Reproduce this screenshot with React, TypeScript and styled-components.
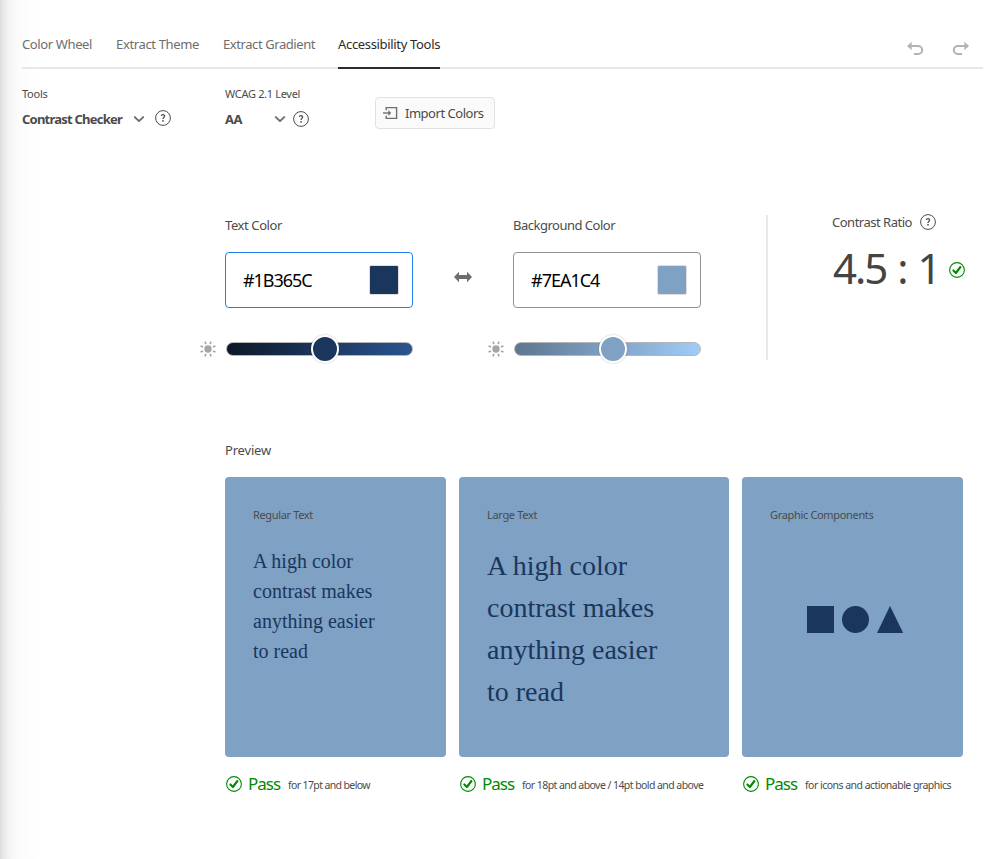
import React from 'react';
import styled, { createGlobalStyle } from 'styled-components';

const TEXT_COLOR = '#1b365c';
const BACKGROUND_COLOR = '#7ea1c4';

const GlobalStyle = createGlobalStyle`
  * { box-sizing: border-box; }
  body { margin: 0; background: #fff; }
  p { margin: 0; }
`;

const Page = styled.div`
  width: 995px;
  height: 859px;
  overflow: hidden;
  padding: 20px 12px 0 22px;
  background: linear-gradient(to right, #dcdcdc 0, #e4e4e4 2px, #efefef 6px, #f6f6f6 11px, #fbfbfb 18px, #fdfdfd 27px, #fff 40px);
  color: #4b4b4b;
  font-family: 'Noto Sans', 'Open Sans', sans-serif;
  font-size: 13px;
`;

const Label = styled.span<{ $size?: number; $bold?: boolean; $ls?: number; $color?: string; $line?: number }>`
  display: block;
  white-space: nowrap;
  font-size: ${p => p.$size ?? 13}px;
  line-height: ${p => p.$line ?? 20}px;
  font-weight: ${p => (p.$bold ? 700 : 400)};
  letter-spacing: ${p => p.$ls ?? -0.4}px;
  color: ${p => p.$color ?? '#4b4b4b'};
`;

const Header = styled.header`
  display: flex;
  justify-content: space-between;
  height: 49px;
  border-bottom: 2px solid #e8e8e8;
`;

const Tabs = styled.nav`
  display: flex;
`;

const Tab = styled.div<{ $width: number; $gap?: number; $ls: number; $active?: boolean }>`
  width: ${p => p.$width}px;
  height: 49px;
  margin-right: ${p => p.$gap ?? 0}px;
  padding-top: 14px;
  line-height: 20px;
  white-space: nowrap;
  letter-spacing: ${p => p.$ls}px;
  color: ${p => (p.$active ? '#2c2c2c' : '#6e6e6e')};
  border-bottom: 2px solid ${p => (p.$active ? '#2c2c2c' : 'transparent')};
`;

const History = styled.div`
  display: flex;
  gap: 28px;
  padding: 20px 13px 0 0;
  color: #b3b3b3;
  svg { display: block; }
`;

const Toolbar = styled.section`
  display: flex;
  height: 146px;
  padding-top: 15px;
`;

const Field = styled.div<{ $width: number }>`
  width: ${p => p.$width}px;
`;

const Picker = styled.div<{ $labelWidth: number; $gap: number; $helpLift?: number }>`
  display: grid;
  grid-template-columns: ${p => p.$labelWidth}px 12px 16px;
  column-gap: ${p => p.$gap}px;
  align-items: center;
  height: 20px;
  margin-top: 5px;
  svg { display: block; }
  svg:last-child { margin-bottom: ${p => p.$helpLift ?? 0}px; }
`;

const ImportButton = styled.button`
  display: flex;
  align-items: center;
  gap: 7px;
  width: 120px;
  height: 32px;
  margin: 13px 0 0;
  padding: 0 0 0 7px;
  border: 1px solid #e1e1e1;
  border-radius: 4px;
  background: #fafafa;
  font-family: inherit;
`;

const Checker = styled.section`
  display: flex;
  height: 145px;
  padding-left: 174px;
`;

const ColorPanel = styled.div`
  width: 217px;
`;

const PanelBody = styled.div`
  padding-left: 29px;
`;

const ColorInput = styled.div<{ $focused?: boolean }>`
  display: flex;
  align-items: center;
  justify-content: space-between;
  width: 188px;
  height: 56px;
  margin-top: 17px;
  padding: 0 13px 0 17px;
  border: 1px solid ${p => (p.$focused ? '#2680eb' : '#909090')};
  border-radius: 4px;
  background: #fff;
`;

const Swatch = styled.div<{ $color: string }>`
  width: 30px;
  height: 30px;
  border: 1px solid #dedede;
  border-radius: 2px;
  background: ${p => p.$color};
`;

const SliderRow = styled.div`
  display: flex;
  align-items: center;
  gap: 10px;
  height: 28px;
  margin-top: 27px;
  padding-left: 4px;
  svg { display: block; flex: none; }
`;

const Track = styled.div<{ $from: string; $to: string }>`
  display: flex;
  flex: none;
  align-items: center;
  justify-content: center;
  width: 187px;
  height: 14px;
  padding-left: 11px;
  border: 1px solid #b5b5b5;
  border-radius: 7px;
  background: linear-gradient(to right, ${p => p.$from}, ${p => p.$to});
`;

const Thumb = styled.div<{ $color: string }>`
  flex: none;
  width: 28px;
  height: 28px;
  border: 2px solid #fff;
  border-radius: 50%;
  background: ${p => p.$color};
  box-shadow: 0 0 2px rgba(0, 0, 0, 0.25);
`;

const Swap = styled.div`
  width: 71px;
  padding: 56px 0 0 41px;
  svg { display: block; }
`;

const Ratio = styled.div`
  width: 217px;
  margin-left: 65px;
  padding-left: 64px;
  border-left: 2px solid #e8e8e8;
`;

const RatioHead = styled.div`
  display: grid;
  grid-template-columns: 80px 16px;
  grid-template-rows: 14px;
  gap: 8px;
  align-items: center;
  height: 14px;
`;

const RatioValue = styled.div`
  display: flex;
  align-items: center;
  gap: 10px;
  height: 50px;
  margin-top: 14px;
  padding-left: 1px;
  word-spacing: 2px;
  svg { display: block; flex: none; margin-top: 4px; }
`;

const Preview = styled.section`
  padding: 80px 0 0 203px;
`;

const Cards = styled.div`
  display: grid;
  grid-template-columns: 221px 270px 221px;
  column-gap: 13px;
  margin-top: 17px;
`;

const Card = styled.article`
  height: 280px;
  padding: 28px;
  border-radius: 4px;
  background: ${BACKGROUND_COLOR};
`;

const Sample = styled.p<{ $size: number; $line: number; $top: number }>`
  margin-top: ${p => p.$top}px;
  font: ${p => p.$size}px/${p => p.$line}px 'Liberation Serif', serif;
  color: ${TEXT_COLOR};
  white-space: pre-line;
`;

const Shapes = styled.div`
  display: flex;
  margin: 81px 0 0 37px;
  svg { display: block; }
`;

const Result = styled.div`
  display: flex;
  align-items: center;
  height: 20px;
  padding: 0 0 0 1px;
  margin-top: 17px;
  svg { display: block; flex: none; }
`;

const PassText = styled(Label)`
  width: 32px;
  margin: 0 8px 0 6px;
`;

const Note = styled(Label)`
  margin-top: 2px;
`;

const HelpIcon = () => (
  <svg width="16" height="16" viewBox="0 0 16 16" fill="none">
    <circle cx="8" cy="8" r="7.4" stroke="#4b4b4b" strokeWidth="1" />
    <path d="M6.3 5.9C6.5 5 7.1 4.7 7.9 4.7c1 0 1.7.5 1.7 1.4 0 1.3-1.6 1.3-1.6 2.9" stroke="#4b4b4b" strokeWidth="1.3" />
    <circle cx="8" cy="10.8" r=".9" fill="#4b4b4b" />
  </svg>
);

const Chevron = () => (
  <svg width="12" height="8" viewBox="0 0 12 8" fill="none">
    <path d="M1.8 2.1 6 6.1l4.2-4" stroke="#6e6e6e" strokeWidth="2" strokeLinecap="round" strokeLinejoin="round" />
  </svg>
);

const CheckIcon = () => (
  <svg width="16" height="16" viewBox="0 0 16 16" fill="none">
    <circle cx="8" cy="8" r="7.4" stroke="#008a00" strokeWidth="1.1" />
    <path d="M4.4 8.4 6.9 11 11.4 5" stroke="#008a00" strokeWidth="2.1" strokeLinecap="round" strokeLinejoin="round" />
  </svg>
);

const UndoIcon = ({ redo }: { redo?: boolean }) => (
  <svg width="18" height="18" viewBox="0 0 18 18" fill="none">
    <g transform={redo ? 'matrix(-1 0 0 1 18 0)' : undefined}>
      <path d="M4 6h8.2a4 4 0 0 1 0 8H8" stroke="currentColor" strokeWidth="2" />
      <path d="M5.6 1.8v8.4L1 6z" fill="currentColor" />
    </g>
  </svg>
);

const ImportIcon = () => (
  <svg width="15" height="14" viewBox="0 0 15 14" fill="none">
    <path d="M3.2 4.2V1.6h10.4v10.8H3.2V9.8" stroke="#6e6e6e" strokeWidth="1.4" />
    <path d="M0 7h6" stroke="#6e6e6e" strokeWidth="1.4" />
    <path d="M5.3 4.1 8.2 7l-2.9 2.9z" fill="#6e6e6e" />
  </svg>
);

const SwapIcon = () => (
  <svg width="18" height="12" viewBox="0 0 18 12">
    <path d="M0 6 5 .8V4h8V.8L18 6l-5 5.2V8H5v3.2z" fill="#6e6e6e" />
  </svg>
);

const SunIcon = () => (
  <svg width="16" height="16" viewBox="0 0 16 16" fill="none" stroke="#a5a5a5">
    <circle cx="8" cy="8" r="3.7" fill="#a5a5a5" stroke="none" />
    {[22.5, 67.5, 112.5, 157.5, 202.5, 247.5, 292.5, 337.5].map(a => (
      <path key={a} d="M8 0v2.7" strokeWidth="1.6" transform={`rotate(${a} 8 8)`} />
    ))}
  </svg>
);

interface ColorControlProps {
  label: string;
  labelSpacing: number;
  hex: string;
  hexSpacing: number;
  color: string;
  from: string;
  to: string;
  focused?: boolean;
}

const ColorControl = (p: ColorControlProps) => (
  <ColorPanel>
    <PanelBody>
      <Label $ls={p.labelSpacing}>{p.label}</Label>
      <ColorInput $focused={p.focused}>
        <Label $size={18} $ls={p.hexSpacing} $color="#000">{p.hex}</Label>
        <Swatch $color={p.color} />
      </ColorInput>
    </PanelBody>
    <SliderRow>
      <SunIcon />
      <Track $from={p.from} $to={p.to}>
        <Thumb $color={p.color} />
      </Track>
    </SliderRow>
  </ColorPanel>
);

const PassResult = ({ note, spacing }: { note: string; spacing: number }) => (
  <Result>
    <CheckIcon />
    <PassText $size={17} $ls={-1} $color="#008a00">Pass</PassText>
    <Note $size={10.5} $ls={spacing}>{note}</Note>
  </Result>
);

export default function App() {
  return (
    <Page>
      <GlobalStyle />
      <Header>
        <Tabs>
          <Tab $width={70} $gap={24} $ls={-0.38}>Color Wheel</Tab>
          <Tab $width={83} $gap={24} $ls={-0.35}>Extract Theme</Tab>
          <Tab $width={92} $gap={23} $ls={-0.42}>Extract Gradient</Tab>
          <Tab $width={102} $ls={-0.33} $active>Accessibility Tools</Tab>
        </Tabs>
        <History>
          <UndoIcon />
          <UndoIcon redo />
        </History>
      </Header>

      <Toolbar>
        <Field $width={203}>
          <Label $size={11} $ls={-0.25}>Tools</Label>
          <Picker $labelWidth={101} $gap={10} $helpLift={2}>
            <Label $bold $ls={-0.77}>Contrast Checker</Label>
            <Chevron />
            <HelpIcon />
          </Picker>
        </Field>
        <Field $width={150}>
          <Label $size={11} $ls={-0.32}>WCAG 2.1 Level</Label>
          <Picker $labelWidth={42} $gap={7}>
            <Label $bold $ls={-0.45}>AA</Label>
            <Chevron />
            <HelpIcon />
          </Picker>
        </Field>
        <ImportButton>
          <ImportIcon />
          <Label $ls={-0.48}>Import Colors</Label>
        </ImportButton>
      </Toolbar>

      <Checker>
        <ColorControl
          label="Text Color" labelSpacing={-0.4} hex="#1B365C" hexSpacing={-1.05}
          color={TEXT_COLOR} from="#0c1828" to="#2a5591" focused
        />
        <Swap><SwapIcon /></Swap>
        <ColorControl
          label="Background Color" labelSpacing={-0.5} hex="#7EA1C4" hexSpacing={-1}
          color={BACKGROUND_COLOR} from="#5e7690" to="#a0ccf8"
        />
        <Ratio>
          <RatioHead>
            <Label $ls={-0.49}>Contrast Ratio</Label>
            <HelpIcon />
          </RatioHead>
          <RatioValue>
            <Label $size={42} $line={50} $ls={-2} $color="#444">4.5 : 1</Label>
            <CheckIcon />
          </RatioValue>
        </Ratio>
      </Checker>

      <Preview>
        <Label $ls={-0.18}>Preview</Label>
        <Cards>
          <div>
            <Card>
              <Label $size={11} $ls={-0.35}>Regular Text</Label>
              <Sample $size={20} $line={30} $top={21}>{'A high color\ncontrast makes\nanything easier\nto read'}</Sample>
            </Card>
            <PassResult note="for 17pt and below" spacing={-0.62} />
          </div>
          <div>
            <Card>
              <Label $size={11} $ls={-0.33}>Large Text</Label>
              <Sample $size={28} $line={42} $top={20}>{'A high color\ncontrast makes\nanything easier\nto read'}</Sample>
            </Card>
            <PassResult note="for 18pt and above / 14pt bold and above" spacing={-0.56} />
          </div>
          <div>
            <Card>
              <Label $size={11} $ls={-0.33}>Graphic Components</Label>
              <Shapes>
                <svg width="97" height="27" viewBox="0 0 97 27" fill={TEXT_COLOR}>
                  <path d="M0 0h27v27H0z" />
                  <circle cx="48.5" cy="13.5" r="13.5" />
                  <path d="M83 0 96.2 27H70z" />
                </svg>
              </Shapes>
            </Card>
            <PassResult note="for icons and actionable graphics" spacing={-0.52} />
          </div>
        </Cards>
      </Preview>
    </Page>
  );
}
